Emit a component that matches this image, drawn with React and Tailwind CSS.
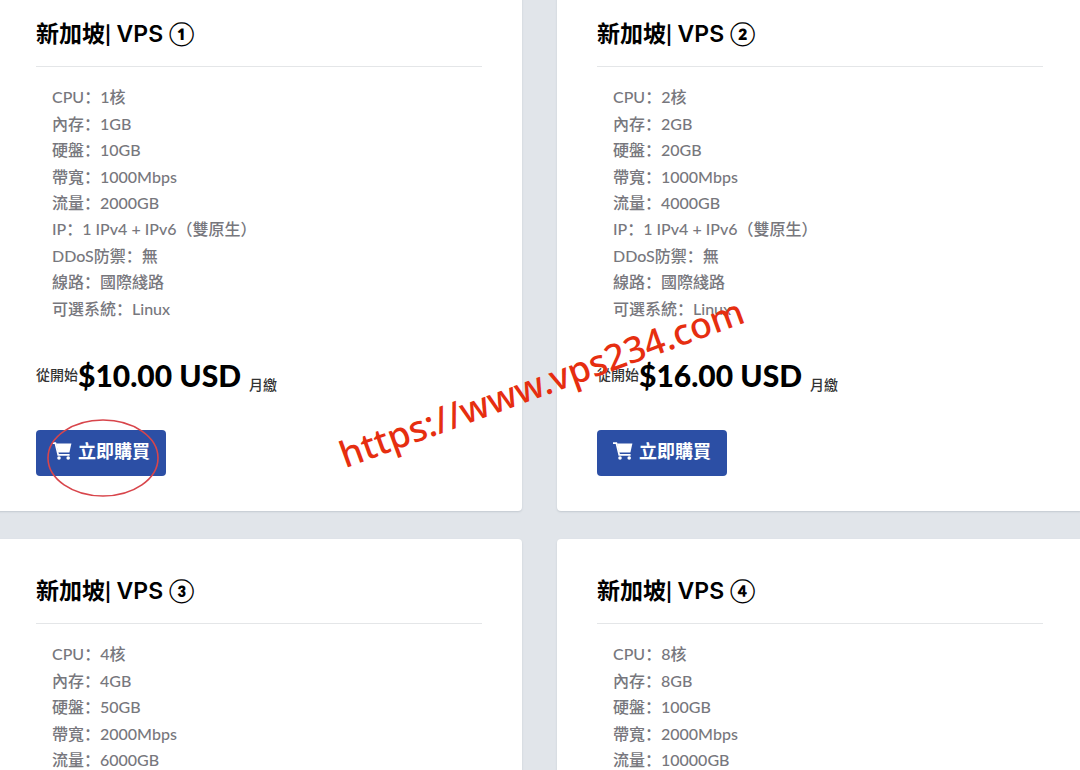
import React from "react";

const plans = [
    { id: 1, mark: "①", cpu: "1核", memory: "1GB", disk: "10GB", bandwidth: "1000Mbps", traffic: "2000GB", price: "$10.00 USD", highlighted: true },
    { id: 2, mark: "②", cpu: "2核", memory: "2GB", disk: "20GB", bandwidth: "1000Mbps", traffic: "4000GB", price: "$16.00 USD" },
    { id: 3, mark: "③", cpu: "4核", memory: "4GB", disk: "50GB", bandwidth: "2000Mbps", traffic: "6000GB", price: "$32.00 USD" },
    { id: 4, mark: "④", cpu: "8核", memory: "8GB", disk: "100GB", bandwidth: "2000Mbps", traffic: "10000GB", price: "$64.00 USD" },
];

const CartIcon = () => (
    <svg width="20" height="18" viewBox="0 0 20 18" aria-hidden="true">
        <path d="M0 1.2h3.4l2.8 11.6h11.4" fill="none" stroke="currentColor" strokeWidth="1.7" />
        <path d="M4 1.6h15.4l-2 9H6.2z" fill="currentColor" />
        <circle cx="7" cy="16" r="1.8" fill="currentColor" />
        <circle cx="16.2" cy="16" r="1.8" fill="currentColor" />
    </svg>
);

const PlanCard = ({ plan }) => {
    const specs = [
        `CPU：${plan.cpu}`,
        `內存：${plan.memory}`,
        `硬盤：${plan.disk}`,
        `帶寬：${plan.bandwidth}`,
        `流量：${plan.traffic}`,
        "IP：1 IPv4 + IPv6（雙原生）",
        "DDoS防禦：無",
        "線路：國際綫路",
        "可選系統：Linux",
    ];

    return (
        <article className="rounded bg-white px-10 py-[35px] shadow-[0_1px_2px_#c3c9d0]">
            <h2 className="border-b border-[#e4e6e8] pb-[17px] text-[23px] leading-8 font-bold text-black">
                新加坡| <span className="font-['Inter','Noto_Sans_CJK_SC',sans-serif] leading-none font-semibold">VPS</span> {plan.mark}
            </h2>

            <ul className="mt-[17px] grid min-h-[238px] items-center pl-4 text-base leading-6 font-medium text-[#77777d]">
                {specs.map((spec) => (
                    <li key={spec}>{spec}</li>
                ))}
            </ul>

            <div className="mt-[33px] flex items-center text-sm leading-10 font-medium text-[#333]">
                <span>從開始</span>
                <span className="text-[30px] font-black text-black">{plan.price}</span>
                <span className="ml-2 pt-5 leading-5">月繳</span>
            </div>

            <div className="relative mt-[35px] flex">
                <button type="button" className="flex h-[46px] items-center gap-1.5 rounded bg-[#2c4fa5] px-4 pb-1 text-lg font-bold text-white">
                    <CartIcon />
                    立即購買
                </button>
                {plan.highlighted && (
                    <svg className="pointer-events-none absolute -top-3 left-2.5" width="114" height="80" viewBox="0 0 114 80" fill="none" aria-hidden="true">
                        <ellipse cx="57" cy="40" rx="55" ry="38" stroke="#d8454b" strokeWidth="1.6" />
                    </svg>
                )}
            </div>
        </article>
    );
};

const App = () => {
    return (
        <div className="relative h-screen overflow-hidden bg-[#e1e5ea] font-['Lato','Noto_Sans_CJK_SC',sans-serif]">
            <main className="-mt-[18px] -mr-[3px] -ml-1 grid grid-cols-2 gap-x-[35px] gap-y-7">
                {plans.map((plan) => (
                    <PlanCard key={plan.id} plan={plan} />
                ))}
            </main>

            <div className="pointer-events-none absolute top-[359px] left-[328px] -rotate-20 font-['Noto_Sans',sans-serif] text-4xl leading-12 font-medium whitespace-nowrap text-[#e62e10]">
                https://www.vps234.com
            </div>
        </div>
    );
};

export default App;
